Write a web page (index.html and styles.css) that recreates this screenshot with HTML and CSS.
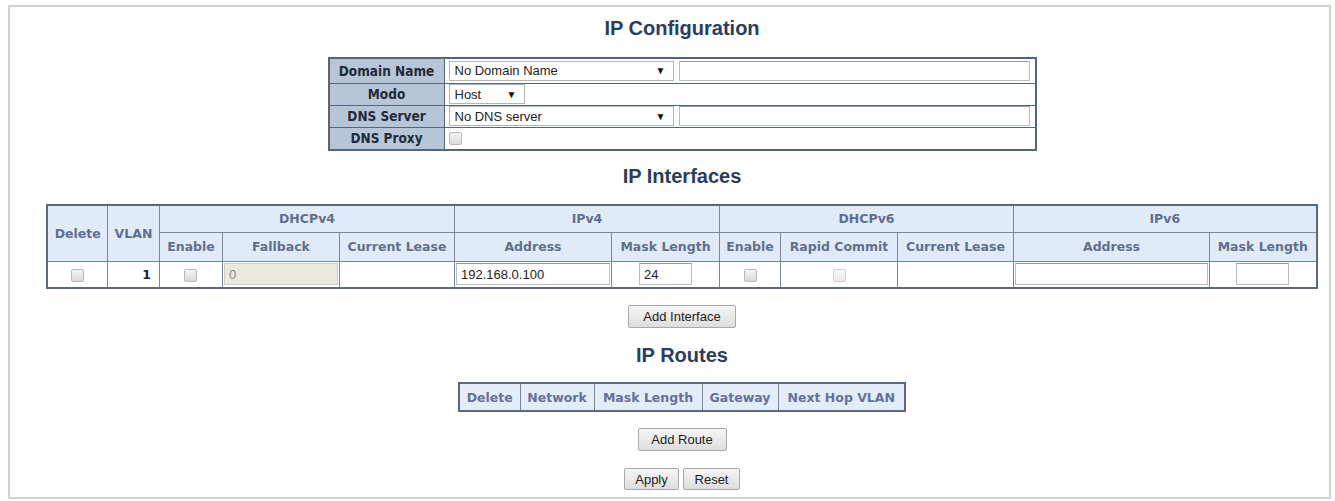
FILE: index.html
```html
<!DOCTYPE html>
<html>
<head>
<meta charset="utf-8">
<title>IP Configuration</title>
<link rel="stylesheet" href="styles.css">
</head>
<body>
<div class="frame">
  <h1 class="title t1">IP Configuration</h1>
  <table class="config">
    <tr class="r1">
      <td class="lbl">Domain Name</td>
      <td class="val"><div class="vrow"><div class="sel wide"><span>No Domain Name</span><span class="arr">▼</span></div><input class="txt cfgtxt" type="text"></div></td>
    </tr>
    <tr class="r2">
      <td class="lbl">Modo</td>
      <td class="val"><div class="vrow"><div class="sel short"><span>Host</span><span class="arr">▼</span></div></div></td>
    </tr>
    <tr class="r3">
      <td class="lbl">DNS Server</td>
      <td class="val"><div class="vrow"><div class="sel wide"><span>No DNS server</span><span class="arr">▼</span></div><input class="txt cfgtxt" type="text"></div></td>
    </tr>
    <tr class="r4">
      <td class="lbl">DNS Proxy</td>
      <td class="val"><div class="vrow"><input class="cb" type="checkbox"></div></td>
    </tr>
  </table>

  <h1 class="title t2">IP Interfaces</h1>
  <table class="grid iface">
    <colgroup>
      <col style="width:60px"><col style="width:52px"><col style="width:63px"><col style="width:117px"><col style="width:115px"><col style="width:157px"><col style="width:108px"><col style="width:61px"><col style="width:117px"><col style="width:116px"><col style="width:196px"><col style="width:107px">
    </colgroup>
    <tr class="h1row">
      <th rowspan="2">Delete</th>
      <th rowspan="2">VLAN</th>
      <th colspan="3">DHCPv4</th>
      <th colspan="2">IPv4</th>
      <th colspan="3">DHCPv6</th>
      <th colspan="2">IPv6</th>
    </tr>
    <tr class="h2row">
      <th>Enable</th>
      <th>Fallback</th>
      <th>Current Lease</th>
      <th>Address</th>
      <th>Mask Length</th>
      <th>Enable</th>
      <th>Rapid Commit</th>
      <th>Current Lease</th>
      <th>Address</th>
      <th>Mask Length</th>
    </tr>
    <tr class="drow">
      <td class="c"><input class="cb" type="checkbox"></td>
      <td class="num">1</td>
      <td class="c"><input class="cb" type="checkbox"></td>
      <td class="fill"><input class="txt dis" type="text" value="0" disabled></td>
      <td></td>
      <td class="fill"><input class="txt" type="text" value="192.168.0.100"></td>
      <td class="c"><input class="txt mask" type="text" value="24"></td>
      <td class="c"><input class="cb" type="checkbox"></td>
      <td class="c"><input class="cb" type="checkbox" disabled></td>
      <td></td>
      <td class="fill"><input class="txt" type="text"></td>
      <td class="c"><input class="txt mask" type="text"></td>
    </tr>
  </table>

  <button class="btn b-addif" type="button">Add Interface</button>

  <h1 class="title t3">IP Routes</h1>
  <table class="grid routes">
    <colgroup>
      <col style="width:61px"><col style="width:74px"><col style="width:108px"><col style="width:76px"><col style="width:127px">
    </colgroup>
    <tr class="rrow">
      <th>Delete</th>
      <th>Network</th>
      <th>Mask Length</th>
      <th>Gateway</th>
      <th>Next Hop VLAN</th>
    </tr>
  </table>

  <button class="btn b-addrt" type="button">Add Route</button>

  <div class="actions">
    <button class="btn b-apply" type="button">Apply</button>
    <button class="btn b-reset" type="button">Reset</button>
  </div>
</div>
</body>
</html>
```

FILE: styles.css
```css
html, body {
  margin: 0;
  padding: 0;
  background: #ffffff;
}

body {
  font-family: "Liberation Sans", Arial, sans-serif;
  font-size: 13px;
  color: #222;
}

.frame {
  margin: 5px 4px 0 8px;
  height: 494px;
  box-sizing: border-box;
  border: 2px solid #d2d2d2;
  padding-left: 25px;
  display: flex;
  flex-direction: column;
  align-items: center;
  overflow: hidden;
}

.title {
  margin: 0;
  font-family: "Liberation Sans", Arial, sans-serif;
  font-size: 20px;
  line-height: 24px;
  font-weight: bold;
  color: #2b3d5d;
  text-align: center;
}

.t1 { margin-top: 9px; }
.t2 { margin-top: 13px; }
.t3 { margin-top: 15px; }

/* ---------- config table ---------- */
.config {
  margin-top: 17px;
  width: 709px;
  border-collapse: collapse;
  border: 2px solid #56667a;
}

.config td {
  border: 1px solid #56667a;
  padding: 0;
}

.config .r1 { height: 25px; }
.config .r2 { height: 22px; }
.config .r3 { height: 22px; }
.config .r4 { height: 23px; }

.config .lbl {
  width: 114px;
  background: #b7c6d7;
  text-align: center;
  font-family: "DejaVu Sans Condensed", "DejaVu Sans", sans-serif;
  font-stretch: condensed;
  font-weight: bold;
  font-size: 13.5px;
  color: #1f2b3b;
  white-space: nowrap;
}

.config .val {
  background: #fff;
  padding: 0 4px;
}

.vrow {
  display: flex;
  align-items: center;
  gap: 5px;
}

.sel {
  display: flex;
  align-items: center;
  justify-content: space-between;
  height: 20px;
  box-sizing: border-box;
  border: 1px solid #b4b4b4;
  background: #fff;
  padding: 0 7px 0 5px;
  font-size: 13px;
  color: #222;
}

.sel.wide { width: 225px; }
.sel.short { width: 76px; }

.arr {
  font-size: 10px;
  color: #111;
}

.txt {
  height: 22px;
  box-sizing: border-box;
  border: 1px solid #bdbdbd;
  border-top-color: #9a9a9a;
  background: #fff;
  padding: 0 4px;
  margin: 0;
  font-family: "Liberation Sans", Arial, sans-serif;
  font-size: 13px;
  color: #222;
  outline: none;
}

.cfgtxt {
  width: 351px;
  height: 20px;
}

.cb {
  -webkit-appearance: none;
  appearance: none;
  width: 13px;
  height: 13px;
  margin: 0;
  border: 1px solid #b9b9b9;
  border-radius: 2px;
  background: linear-gradient(#f3f3f3, #dadada);
  vertical-align: middle;
  display: inline-block;
}

.cb:disabled {
  border-color: #d0d0d0;
  background: linear-gradient(#f7f7f7, #ececec);
}

/* ---------- grid tables ---------- */
.grid {
  border-collapse: collapse;
  border: 2px solid #5e6876;
  table-layout: fixed;
}

.grid th,
.grid td {
  border: 1px solid #7c8794;
  padding: 0 2px;
}

.grid th {
  background: #dfebf8;
  font-family: "DejaVu Sans", Verdana, sans-serif;
  font-weight: bold;
  font-size: 12.5px;
  color: #61708a;
  text-align: center;
  white-space: nowrap;
}

.iface {
  margin-top: 16px;
  width: 1269px;
}

.iface .h1row { height: 27px; }
.iface .h2row { height: 29px; }
.iface .drow { height: 27px; }

.iface td {
  background: #fff;
  text-align: center;
}

.iface td.fill {
  padding: 0 1px;
}

.iface td.fill .txt {
  width: 100%;
  display: block;
  text-align: left;
}

.iface td.num {
  text-align: right;
  padding-right: 8px;
  font-family: "DejaVu Sans", Verdana, sans-serif;
  font-weight: bold;
  font-size: 12.5px;
  color: #222;
}

.txt.dis {
  background: #ebe8df;
  color: #8a8a8a;
  border-color: #cfccc4;
}

.txt.mask {
  width: 53px;
  vertical-align: middle;
}

.routes {
  margin-top: 15px;
  width: 446px;
}

.routes .rrow { height: 28px; }

.routes th {
  color: #66709a;
  background: #e2edf9;
}

/* ---------- buttons ---------- */
.btn {
  height: 23px;
  box-sizing: border-box;
  border: 1px solid #a9a9a9;
  border-radius: 2px;
  background: linear-gradient(#f6f6f6, #dddddd);
  font-family: "Liberation Sans", Arial, sans-serif;
  font-size: 13px;
  color: #222;
  padding: 0;
  margin: 0;
  cursor: pointer;
}

.b-addif { width: 108px; margin-top: 16px; }
.b-addrt { width: 89px; margin-top: 16px; }

.actions {
  display: flex;
  gap: 4px;
  margin-top: 17px;
}

.b-apply { width: 55px; height: 22px; }
.b-reset { width: 57px; height: 22px; }
```
